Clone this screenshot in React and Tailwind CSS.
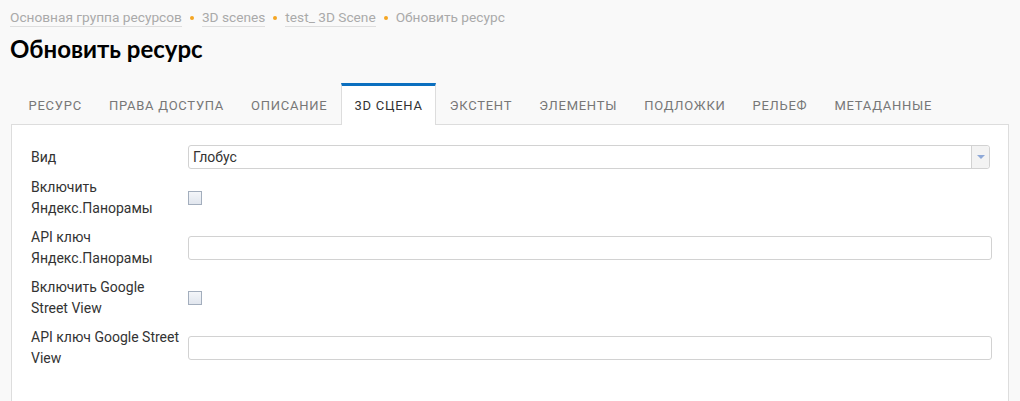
import React from 'react';

const crumbs = ['Основная группа ресурсов', '3D scenes', 'test_ 3D Scene'];

const tabs = [
  'Ресурс',
  'Права доступа',
  'Описание',
  '3D сцена',
  'Экстент',
  'Элементы',
  'Подложки',
  'Рельеф',
  'Метаданные'
];

const Dot = () => (
  <span className="mx-[8px] inline-block h-[4px] w-[4px] rounded-full bg-[#f5a623]" />
);

const Checkbox = () => (
  <span className="block h-[14px] w-[14px] border border-[#a3aebd] bg-gradient-to-b from-[#f4f6f9] to-[#e1e6ee]" />
);

const TextInput = () => (
  <div className="h-[24px] flex-1 rounded-[3px] border border-[#d2d2d2] bg-white" />
);

const Row = ({ label, children }) => (
  <div className="flex items-center">
    <div className="w-[157px] shrink-0 pr-[4px] text-[14px] leading-[21px] text-[#333]">
      {label}
    </div>
    <div className="flex flex-1 items-center">{children}</div>
  </div>
);

const App = () => {
  const activeTab = '3D сцена';

  return (
    <div className="h-[401px] overflow-hidden bg-[#f9f9f9] font-['Roboto',sans-serif]">
      <div className="flex items-center px-[10px] pt-[9px] text-[13.7px] leading-[16px] text-[#aaa]">
        {crumbs.map((c) => (
          <React.Fragment key={c}>
            <span className="border-b border-[#dedede] pb-[1px]">{c}</span>
            <Dot />
          </React.Fragment>
        ))}
        <span className="pb-[2px]">Обновить ресурс</span>
      </div>

      <h1 className="mt-[7px] px-[10px] font-['Lato',sans-serif] text-[24px] font-bold leading-[30px] text-black">
        Обновить ресурс
      </h1>

      <div className="mx-[11px] mt-[19px] flex pl-[4px]">
        {tabs.map((t) => (
          <div
            key={t}
            className={
              t === activeTab
                ? '-mb-px relative z-10 h-[42px] border-x border-t-[3px] border-x-[#ddd] border-t-[#0b6fbf] bg-white px-[12.5px] pt-[10px] text-[13px] uppercase tracking-[0.75px] text-[#333]'
                : 'h-[41px] px-[13.5px] pt-[13px] text-[13px] uppercase tracking-[0.75px] text-[#777]'
            }
          >
            {t}
          </div>
        ))}
      </div>

      <div className="mx-[11px] h-[300px] w-[998px] border border-[#ddd] bg-white pl-[19px] pr-[16px] pt-[20px]">
        <div className="flex flex-col gap-[8px]">
          <Row label="Вид">
            <div className="flex h-[24px] flex-1 rounded-[3px] border border-[#d2d2d2] bg-white">
              <span className="flex-1 pl-[4px] text-[14px] leading-[22px] text-[#333]">
                Глобус
              </span>
              <span className="flex w-[18px] items-center justify-center rounded-r-[3px] border-l border-[#d2d2d2] bg-[#f3f3f3]">
                <svg width="8" height="4" viewBox="0 0 8 4">
                  <path d="M0 0h8L4 4z" fill="#8fa9d8" />
                </svg>
              </span>
            </div>
            <span className="w-[2px]" />
          </Row>
          <Row label={<>Включить<br />Яндекс.Панорамы</>}>
            <Checkbox />
          </Row>
          <Row label={<>API ключ<br />Яндекс.Панорамы</>}>
            <TextInput />
          </Row>
          <Row label={<>Включить Google<br />Street View</>}>
            <Checkbox />
          </Row>
          <Row label={<>API ключ Google Street<br />View</>}>
            <TextInput />
          </Row>
        </div>
      </div>
    </div>
  );
};

export default App;
